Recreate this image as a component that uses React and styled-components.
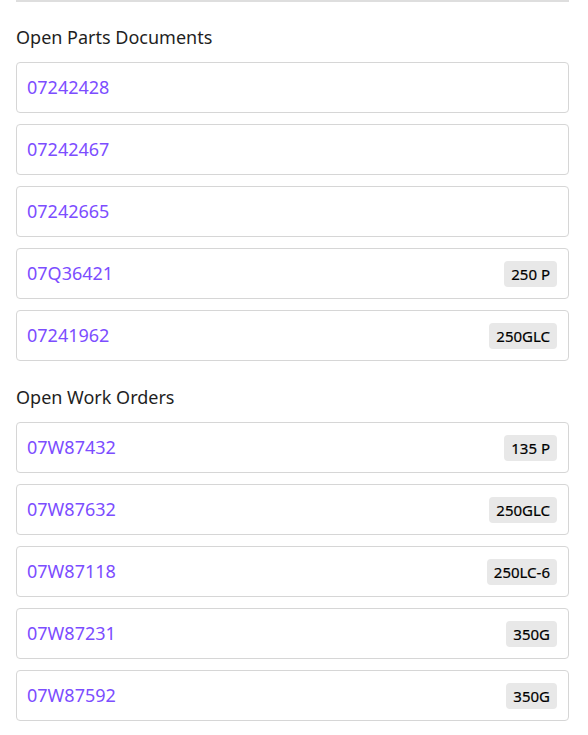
import React from "react";
import styled, { createGlobalStyle } from "styled-components";

const Global = createGlobalStyle`
  html, body { margin: 0; padding: 0; background: #fff; }
  body { font-family: "Noto Sans", "Open Sans", sans-serif; }
`;

const Page = styled.div`
  padding: 0 19px 0 16px;
`;

const Rule = styled.div`
  height: 2px;
  background: #dedede;
`;

const Section = styled.section`
  margin-top: ${(p) => p.$top}px;
`;

const Heading = styled.h2`
  margin: 0 0 13px;
  font-size: 18px;
  line-height: 24px;
  font-weight: 400;
  color: #1f1f1f;
`;

const List = styled.div`
  display: flex;
  flex-direction: column;
  gap: 11px;
`;

const Card = styled.div`
  box-sizing: border-box;
  height: 51px;
  border: 1px solid #d6d6d6;
  border-radius: 4px;
  display: flex;
  align-items: center;
  justify-content: space-between;
  padding: 0 11px 0 10px;
`;

const Link = styled.a`
  font-size: 18px;
  line-height: 24px;
  margin-top: -2px;
  color: #7c4dff;
  text-decoration: none;
  cursor: pointer;
`;

const Badge = styled.span`
  box-sizing: border-box;
  background: #e8e8e8;
  border-radius: 4px;
  height: 26px;
  padding: 0 7px;
  display: inline-flex;
  align-items: center;
  font-size: 15px;
  font-weight: 400;
  color: #000;
  -webkit-text-stroke: 0.2px #000;
`;

const parts = [
  { id: "07242428" },
  { id: "07242467" },
  { id: "07242665" },
  { id: "07Q36421", tag: "250 P" },
  { id: "07241962", tag: "250GLC" },
];

const orders = [
  { id: "07W87432", tag: "135 P" },
  { id: "07W87632", tag: "250GLC" },
  { id: "07W87118", tag: "250LC-6" },
  { id: "07W87231", tag: "350G" },
  { id: "07W87592", tag: "350G" },
];

const Group = ({ title, items, top }) => (
  <Section $top={top}>
    <Heading>{title}</Heading>
    <List>
      {items.map((it) => (
        <Card key={it.id}>
          <Link>{it.id}</Link>
          {it.tag && <Badge>{it.tag}</Badge>}
        </Card>
      ))}
    </List>
  </Section>
);

export default function App() {
  return (
    <>
      <Global />
      <Page>
        <Rule />
        <Group title="Open Parts Documents" items={parts} top={23} />
        <Group title="Open Work Orders" items={orders} top={24} />
      </Page>
    </>
  );
}
